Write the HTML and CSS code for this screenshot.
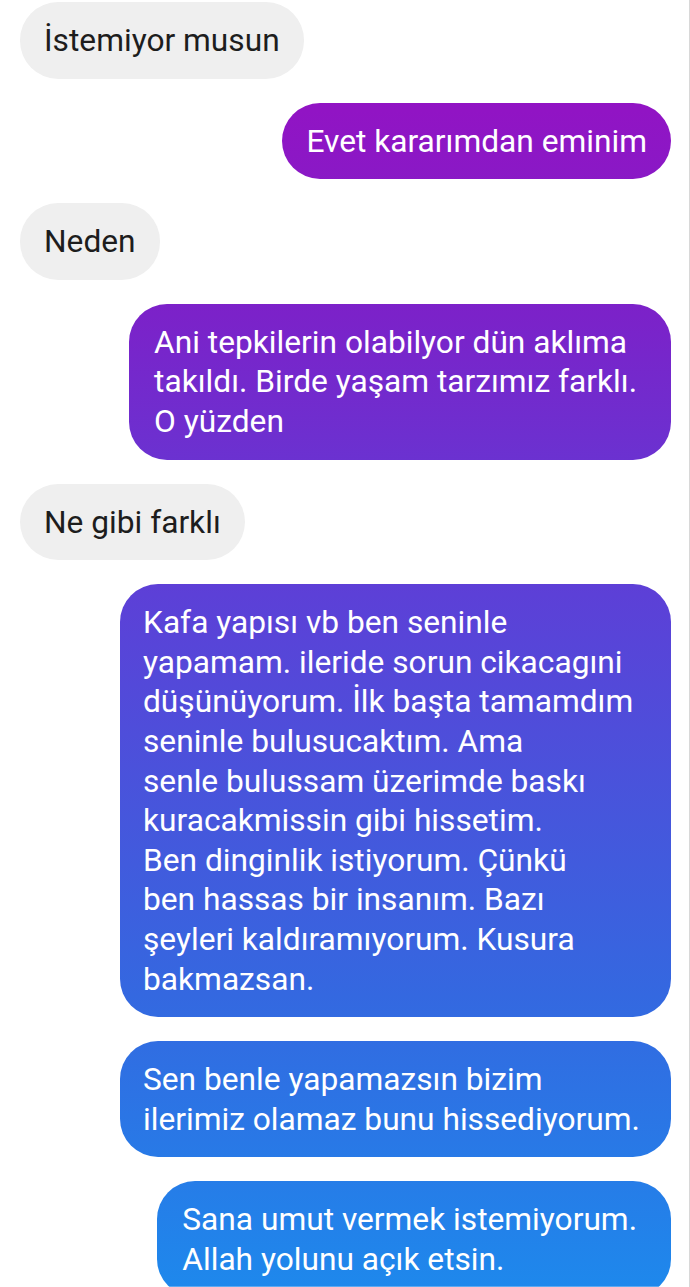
FILE: index.html
```html
<!DOCTYPE html>
<html lang="tr">
<head>
<meta charset="utf-8">
<title>Chat</title>
<link rel="stylesheet" href="styles.css">
</head>
<body>
<div class="chat">
  <div class="row in"><div class="bubble gray">İstemiyor musun</div></div>
  <div class="row out"><div class="bubble grad">Evet kararımdan eminim</div></div>
  <div class="row in"><div class="bubble gray">Neden</div></div>
  <div class="row out"><div class="bubble grad multi">Ani tepkilerin olabilyor dün aklıma<br>takıldı. Birde yaşam tarzımız farklı.<br>O yüzden</div></div>
  <div class="row in"><div class="bubble gray">Ne gibi farklı</div></div>
  <div class="row out"><div class="bubble grad wide">Kafa yapısı vb ben seninle<br>yapamam. ileride sorun cikacagıni<br>düşünüyorum. İlk başta tamamdım<br>seninle bulusucaktım. Ama<br>senle bulussam üzerimde baskı<br>kuracakmissin gibi hissetim.<br>Ben dinginlik istiyorum. Çünkü<br>ben hassas bir insanım. Bazı<br>şeyleri kaldıramıyorum. Kusura<br>bakmazsan.</div></div>
  <div class="row out"><div class="bubble grad wide">Sen benle yapamazsın bizim<br>ilerimiz olamaz bunu hissediyorum.</div></div>
  <div class="row out"><div class="bubble grad multi">Sana umut vermek istemiyorum.<br>Allah yolunu açık etsin.</div></div>
</div>
</body>
</html>
```

FILE: styles.css
```css
html, body {
  margin: 0;
  padding: 0;
  background: #ffffff;
}
body {
  font-family: Roboto, "Noto Sans", "Liberation Sans", sans-serif;
  width: 690px;
  height: 1287px;
  overflow: hidden;
  border-right: 1px solid #d8d8d8;
  box-sizing: border-box;
}
.chat {
  display: flex;
  flex-direction: column;
  gap: 24px;
  padding: 2px 18px 0 20px;
}
.row {
  display: flex;
}
.row.in { justify-content: flex-start; }
.row.out { justify-content: flex-end; }
.bubble {
  font-size: 31.7px;
  line-height: 39.6px;
  padding: 19px 24px 18px 24px;
  border-radius: 38px;
  white-space: nowrap;
}
.gray {
  background: #efefef;
  color: #1d1d1d;
}
.grad {
  color: #ffffff;
  background-image: linear-gradient(to bottom, #9b0cc2 0px, #9114c4 110px, #7b22c9 315px, #5c40d7 595px, #3468e0 995px, #1e88ec 1287px);
  background-attachment: fixed;
}
.multi {
  padding-left: 25px;
  padding-right: 34px;
}
.wide {
  width: 551px;
  box-sizing: border-box;
  padding-left: 23px;
}
```
